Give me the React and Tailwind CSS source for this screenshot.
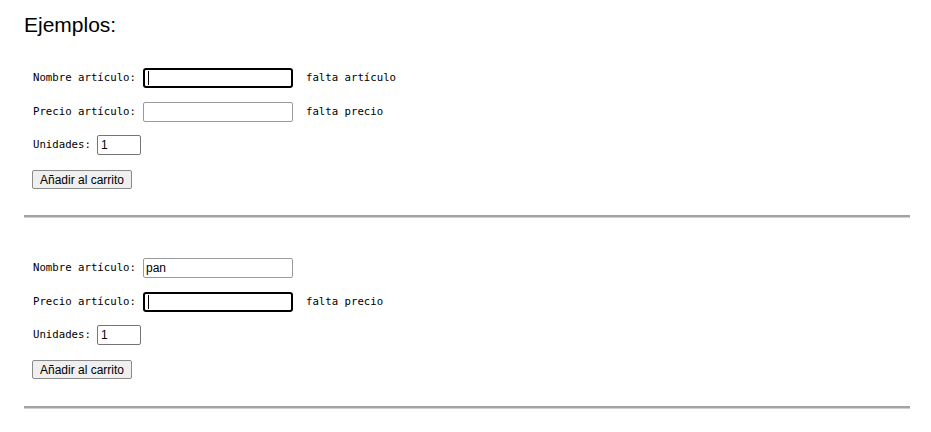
const mono = "font-['DejaVu_Sans_Mono','Liberation_Mono',monospace] text-[10.7px] text-black";
const sans = "font-['Liberation_Sans',Arial,sans-serif]";

function Field({ label, value, focused, width = "w-[150px]", note }) {
  return (
    <div className="flex items-center h-[20px]">
      <span className={`${mono} whitespace-pre`}>{label}</span>
      <div
        className={`${width} h-[20px] ml-[7px] flex items-center bg-white px-[2px] ${sans} text-[12px] text-black ${
          focused ? "border-2 border-black rounded-[3px]" : "border border-[#9a9a9a] rounded-[2px]"
        }`}
      >
        {focused ? <span className="w-px h-[14px] bg-black ml-[1px]" /> : value}
      </div>
      {note && <span className={`${mono} ml-[13px]`}>{note}</span>}
    </div>
  );
}

function CartForm({ nombre, nombreFocus, precioFocus, notaNombre, notaPrecio }) {
  return (
    <div className="flex flex-col ml-[9px]">
      <Field label="Nombre artículo:" value={nombre} focused={nombreFocus} note={notaNombre} />
      <div className="mt-[14px]">
        <Field label="Precio artículo:" focused={precioFocus} note={notaPrecio} />
      </div>
      <div className="mt-[13px] flex items-center h-[20px]">
        <span className={mono}>Unidades:</span>
        <div className={`w-[44px] h-[20px] ml-[6px] flex items-center px-[3px] border border-[#767676] rounded-[2px] ${sans} text-[12px] text-black`}>
          1
        </div>
      </div>
      <div className="mt-[15px] flex">
        <button
          className={`h-[19px] w-[100px] bg-[#efefef] border border-[#8a8a8a] rounded-[2px] ${sans} text-[12px] text-black leading-none -ml-[1px]`}
        >
          Añadir al carrito
        </button>
      </div>
    </div>
  );
}

export default function App() {
  return (
    <div className="w-[931px] h-[432px] bg-white pl-6 pr-[21px] pt-[13px] overflow-hidden">
      <h1 className={`${sans} text-[21px] leading-[24px] text-black`}>Ejemplos:</h1>

      <div className="mt-[31px]">
        <CartForm nombreFocus notaNombre="falta artículo" notaPrecio="falta precio" />
      </div>
      <div className="mt-[26px] h-[3px] bg-[#a3a3a3] border-b border-[#d0d0d0]" />

      <div className="mt-[40px]">
        <CartForm nombre="pan" precioFocus notaPrecio="falta precio" />
      </div>
      <div className="mt-[27px] h-[3px] bg-[#a3a3a3] border-b border-[#d0d0d0]" />
    </div>
  );
}
